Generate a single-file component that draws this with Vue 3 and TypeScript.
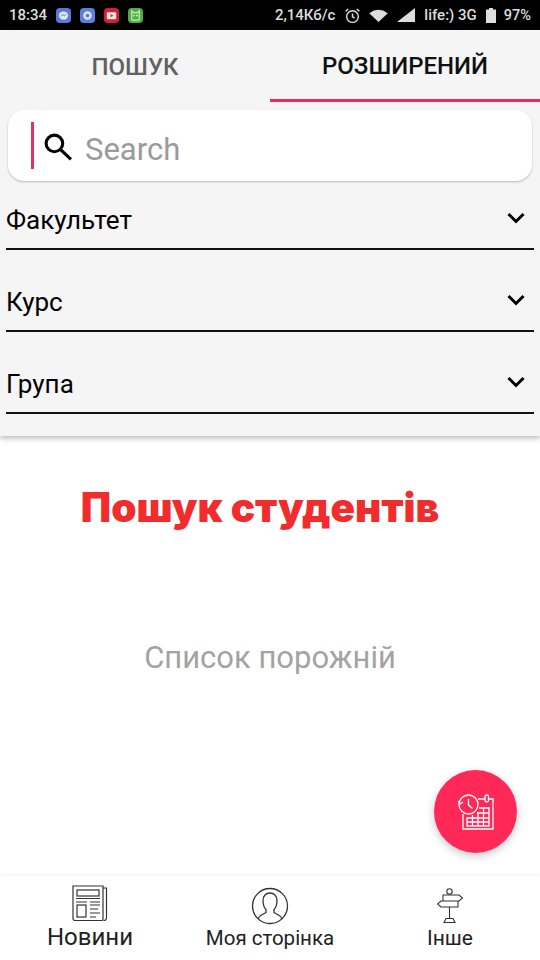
<script setup lang="ts">
const fields: string[] = ['Факультет', 'Курс', 'Група']
</script>

<template>
  <div class="screen">
    <div class="status">
      <div class="st-left">
        <span class="time">18:34</span>
        <svg class="ni" viewBox="0 0 16 16"><rect width="16" height="16" rx="4" fill="#5c78d6"/><ellipse cx="8" cy="8" rx="5" ry="4.4" fill="#dfe6fb"/><path d="M5 9l2-2 2 1.500 2-2" stroke="#5c78d6" fill="none"/></svg>
        <svg class="ni" viewBox="0 0 16 16"><rect width="16" height="16" rx="4" fill="#5c80e0"/><circle cx="8" cy="8" r="4.500" fill="#dfe6fb"/><circle cx="8" cy="8" r="2" fill="#5c80e0"/></svg>
        <svg class="ni" viewBox="0 0 16 16"><rect width="16" height="16" rx="4" fill="#cc2233"/><rect x="3" y="4.500" width="10" height="7.500" rx="1" fill="#f5e6e6"/><path d="M7 6.500l3 1.700-3 1.700z" fill="#cc2233"/></svg>
        <svg class="ni" viewBox="0 0 16 16"><rect width="16" height="16" rx="4" fill="#4fae46"/><path d="M4 3l2 2h4l2-2v9a1 1 0 0 1-1 1H5a1 1 0 0 1-1-1z" fill="none" stroke="#c8efc0" stroke-width="1.300"/><circle cx="6.500" cy="8" r="1" fill="#c8efc0"/><circle cx="9.500" cy="8" r="1" fill="#c8efc0"/></svg>
      </div>
      <div class="st-right">
        <span class="speed">2,14Кб/с</span>
        <svg class="alarm" viewBox="0 0 16 16" fill="none" stroke="#ddd" stroke-width="1.300"><circle cx="8" cy="9" r="5.500"/><path d="M8 6v3.200l2 1.300M1.500 4L4 1.800M14.500 4L12 1.800"/></svg>
        <svg class="wifi" viewBox="0 0 20 14"><path d="M0 4.500Q10-3 20 4.500L10 14z" fill="#ddd"/></svg>
        <svg class="signal" viewBox="0 0 18 14"><path d="M0 14L18 0v14z" fill="#ddd"/></svg>
        <span class="carrier">life:) 3G</span>
        <svg class="batt" viewBox="0 0 10 15"><path d="M3 0h4v1.500h3V15H0V1.500h3z" fill="#ddd"/></svg>
        <span class="pct">97%</span>
      </div>
    </div>

    <div class="panel">
      <div class="tabs">
        <div class="tab">ПОШУК</div>
        <div class="tab active">РОЗШИРЕНИЙ</div>
      </div>
      <div class="search">
        <span class="caret"></span>
        <svg class="mag" viewBox="0 0 28 28" fill="none" stroke="#000" stroke-width="3"><circle cx="11" cy="11" r="8"/><path d="M17 17l10 9.500"/></svg>
        <span class="ph">Search</span>
      </div>
      <div class="fields">
        <div v-for="f in fields" :key="f" class="field">
          <span class="f-label">{{ f }}</span>
          <svg class="chev" viewBox="0 0 18 12" fill="none" stroke="#000" stroke-width="3"><path d="M1.500 2l7.500 7.500L16.500 2"/></svg>
        </div>
      </div>
    </div>

    <div class="main">
      <h1 class="title">Пошук студентів</h1>
      <p class="empty">Список порожній</p>
      <button class="fab" type="button" aria-label="Історія">
        <svg viewBox="0 0 36 36" width="36" height="36" fill="none" stroke="#fff" stroke-width="1.300">
          <path d="M5 20v15h30V5h-4M20 5h7"/>
          <rect x="27" y="1" width="3.500" height="7" rx="1.700"/>
          <path d="M9 24h22v8H9zM14.500 21v11M20 18v14M25.500 14v18M21 14h10v14M19 19h12M9 28h22"/>
          <circle cx="10.500" cy="10.500" r="9.500" fill="#ff2857"/>
          <path d="M10.500 5v6l4 3.500M0 7l2 3 3-2"/>
        </svg>
      </button>
    </div>

    <nav class="bottom">
      <div class="nav-item news">
        <svg viewBox="0 0 36 36" width="36" height="36" fill="none" stroke="#333" stroke-width="1.200">
          <path d="M31 1v33a1.500 1.500 0 0 1-1.500 1.500H3A2 2 0 0 1 1 33.500V1zM31 3h3.500v30a2.500 2.500 0 0 1-3 2.500"/>
          <rect x="5" y="5" width="22" height="6"/>
          <path d="M4 13.500h24M4 17h11M18 17h10M18 20h10M18 24h8M18 28h10M18 32h6" />
          <rect x="5" y="20" width="9" height="12"/>
        </svg>
        <span class="lbl big">Новини</span>
      </div>
      <div class="nav-item me">
        <svg viewBox="0 0 38 38" width="38" height="38" fill="none" stroke="#333" stroke-width="1.300">
          <circle cx="19" cy="19" r="17.500"/>
          <path d="M7 32c1-4 6-5 8-6.500v-3c-2-2-3-5-3-9C12 9 15 6 19 6s7 3 7 7.500c0 4-1 7-3 9v3c2 1.500 7 2.500 8 6.500"/>
        </svg>
        <span class="lbl small">Моя сторінка</span>
      </div>
      <div class="nav-item other">
        <svg viewBox="0 0 26 36" width="26" height="36" fill="none" stroke="#333" stroke-width="1.100">
          <circle cx="12.500" cy="3.500" r="2.700"/>
          <path d="M6 7h16l3.500 3-3.500 3H6zM6 13H4l-3.500 3L4 19h17v-6M12.500 19v11"/>
          <path d="M9 30.500h7l2 4H7z"/>
        </svg>
        <span class="lbl">Інше</span>
      </div>
    </nav>
  </div>
</template>

<style>
html, body { margin: 0; padding: 0; background: #fff; }
</style>

<style scoped>
.screen {
  width: 540px;
  height: 960px;
  display: flex;
  flex-direction: column;
  font-family: Roboto, "Noto Sans", sans-serif;
  overflow: hidden;
  background: #fff;
}
.status {
  height: 30px;
  flex: none;
  background: #000;
  color: #ddd;
  display: flex;
  justify-content: space-between;
  align-items: center;
  padding: 0 9px;
  box-sizing: border-box;
  font-size: 15px;
  font-weight: 500;
}
.st-left, .st-right { display: flex; align-items: center; }
.time { margin-right: 9px; }
.ni { width: 15px; height: 15px; margin-right: 9px; }
.st-right span { white-space: nowrap; }
.alarm { width: 17px; height: 17px; margin-left: 9px; }
.wifi { width: 19px; height: 13px; margin-left: 8px; }
.signal { width: 18px; height: 14px; margin-left: 9px; }
.carrier { margin-left: 9px; }
.batt { width: 10px; height: 15px; margin-left: 9px; }
.pct { margin-left: 8px; font-size: 14.500px; }

.panel {
  flex: none;
  height: 406px;
  background: #f5f5f5;
  box-shadow: 0 2px 6px rgba(0, 0, 0, 0.3);
  position: relative;
  z-index: 1;
}
.tabs { display: flex; height: 72px; }
.tab {
  flex: 1;
  display: flex;
  align-items: center;
  justify-content: center;
  padding-top: 2px;
  font-size: 24px;
  font-weight: 500;
  color: #616161;
  box-sizing: border-box;
}
.tab.active { color: #111; padding-top: 3px; border-bottom: 3px solid #f02a5c; }
.search {
  margin: 8px 8px 0;
  height: 71px;
  box-sizing: border-box;
  padding: 2px 0 0 23px;
  background: #fff;
  border-radius: 16px;
  box-shadow: 0 1px 2px rgba(0, 0, 0, 0.25);
  display: flex;
  align-items: center;
}
.caret { width: 3px; height: 47px; background: #e8305f; margin-top: -3px; }
.mag { width: 29px; height: 29px; margin-left: 9px; }
.ph { margin-left: 13px; font-size: 31px; color: #9a9a9a; margin-top: 6px; }
.fields { padding: 0 6px; }
.field {
  height: 82.250px;
  box-sizing: border-box;
  border-bottom: 2px solid #111;
  display: flex;
  justify-content: space-between;
  align-items: flex-end;
  padding-right: 9px;
  font-size: 26px;
  color: #000;
}
.field:first-child { height: 68.500px; }
.f-label { line-height: 30px; margin-bottom: 13px; }
.chev { width: 18px; height: 12px; margin-bottom: 24px; }

.main { flex: 1; position: relative; }
.title {
  margin: 47px 0 0;
  padding-right: 20px;
  text-align: center;
  font-family: Inter, Roboto, sans-serif;
  font-size: 40.500px;
  line-height: 50px;
  font-weight: 900;
  color: #f12c2c;
}
.empty {
  margin: 105px 0 0;
  text-align: center;
  font-size: 31px;
  line-height: 40px;
  color: #a3a3a3;
}
.fab {
  position: absolute;
  left: 434px;
  top: 334px;
  width: 83px;
  height: 83px;
  border: 0;
  padding: 0;
  border-radius: 50%;
  background: #ff2857;
  box-shadow: 0 3px 8px rgba(0, 0, 0, 0.22);
  display: flex;
  align-items: center;
  justify-content: center;
}
.bottom {
  flex: none;
  height: 84px;
  background: #fff;
  box-shadow: 0 -1px 3px rgba(0, 0, 0, 0.07);
  position: relative;
  color: #222;
}
.nav-item {
  position: absolute;
  top: 9px;
  display: flex;
  flex-direction: column;
  align-items: center;
}
.news { left: 0; width: 180px; }
.me { left: 180px; width: 180px; top: 11px; }
.other { left: 360px; width: 180px; top: 12px; }
.lbl { font-size: 21px; line-height: 26px; white-space: nowrap; margin-top: 1px; }
.lbl.small { font-size: 20.500px; margin-top: 0; }
.lbl.big { font-size: 24px; line-height: 30px; margin-top: 1px; }
</style>
